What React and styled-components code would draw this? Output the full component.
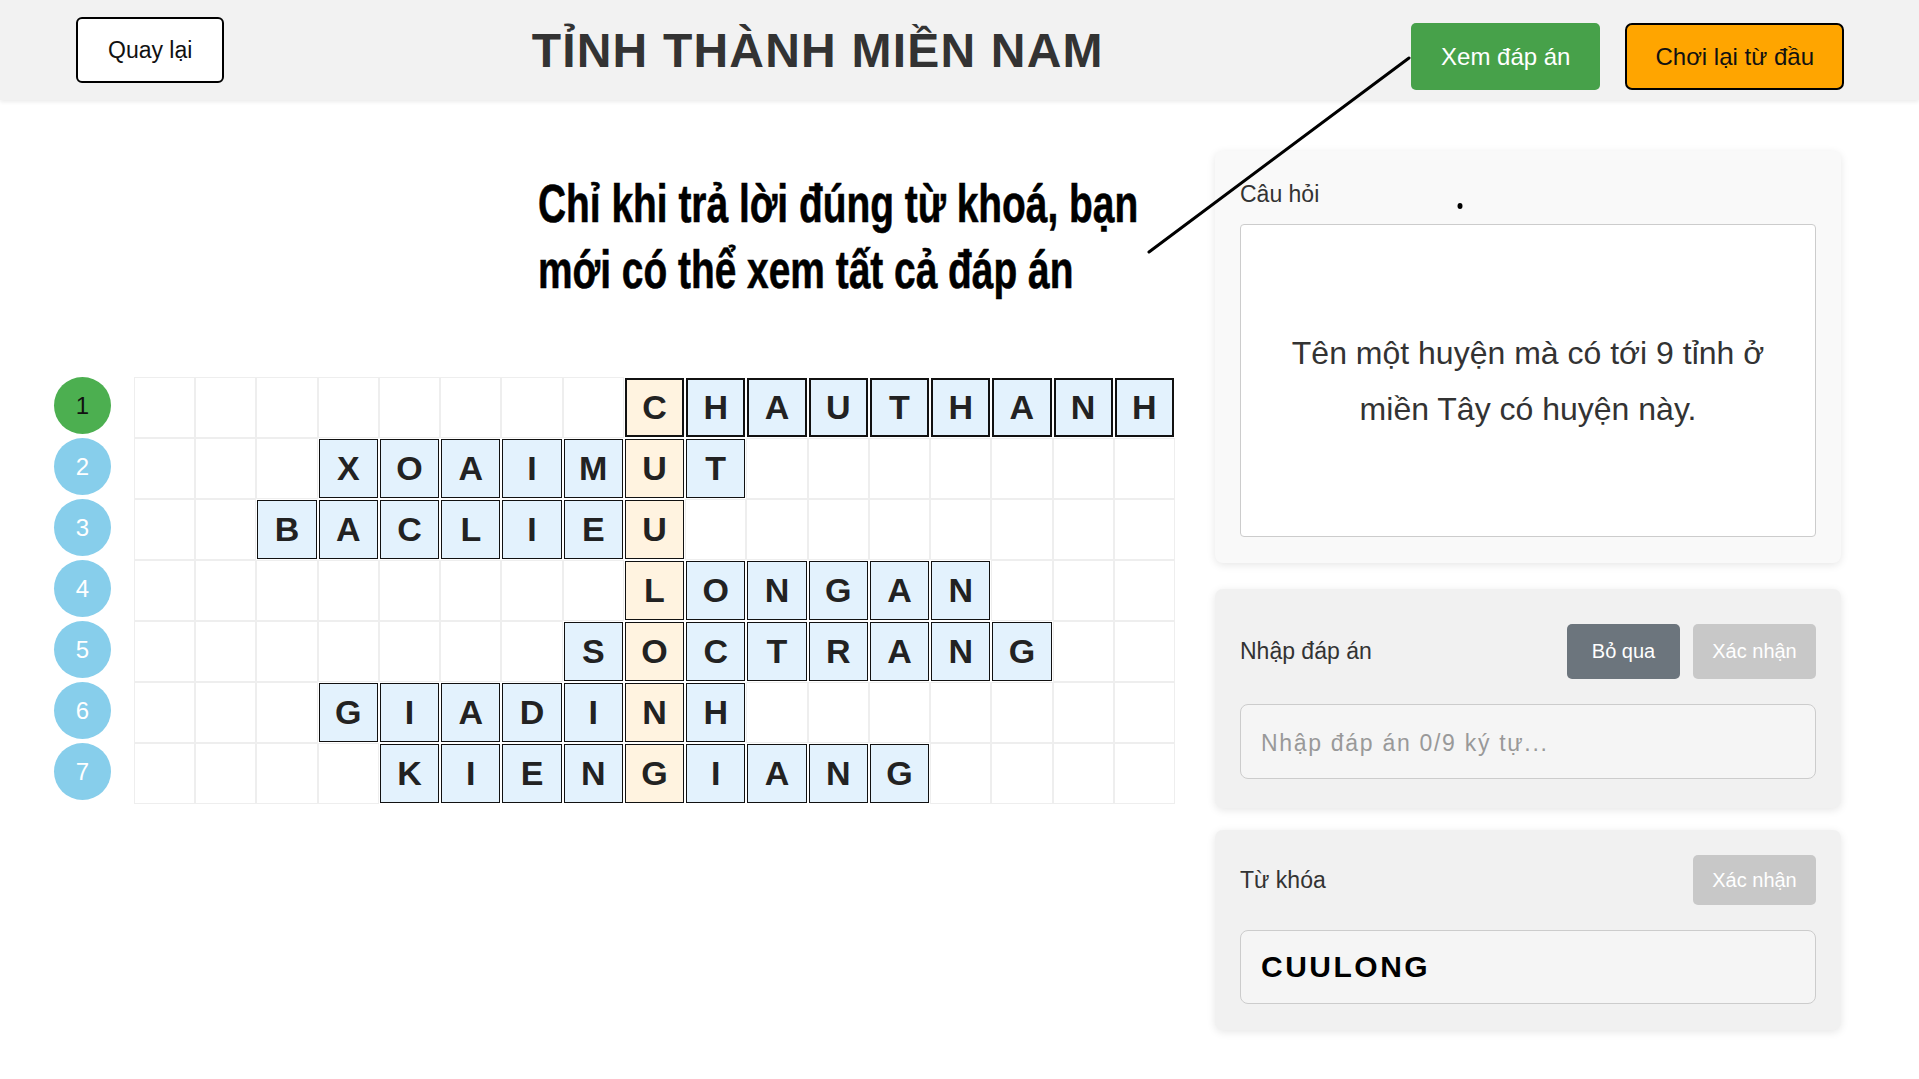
import React from "react";
import styled, { createGlobalStyle, css } from "styled-components";

const rows = [
  { word: "CHAUTHANH", start: 8 },
  { word: "XOAIMUT", start: 3 },
  { word: "BACLIEU", start: 2 },
  { word: "LONGAN", start: 8 },
  { word: "SOCTRANG", start: 7 },
  { word: "GIADINH", start: 3 },
  { word: "KIENGIANG", start: 4 },
];
const COLS = 17;
const KEY_COL = 8;
const ACTIVE_ROW = 0;

const GlobalStyle = createGlobalStyle`
  *, *::before, *::after { box-sizing: border-box; }
  body {
    margin: 0;
    background: #fff;
    font-family: "Liberation Sans", Arial, sans-serif;
    color: #333;
  }
`;

const App = () => {
  return (
    <Page>
      <GlobalStyle />
      <Header>
        <BackButton>Quay lại</BackButton>
        <Title>TỈNH THÀNH MIỀN NAM</Title>
        <Actions>
          <HeaderButton $variant="green">Xem đáp án</HeaderButton>
          <HeaderButton $variant="orange">Chơi lại từ đầu</HeaderButton>
        </Actions>
      </Header>

      <Main>
        <BoardArea>
          <Numbers>
            {rows.map((r, i) => (
              <Number key={i} $active={i === ACTIVE_ROW}>
                {i + 1}
              </Number>
            ))}
          </Numbers>
          <Board>
            {rows.map((r, ri) =>
              Array.from({ length: COLS }).map((_, ci) => {
                const idx = ci - r.start;
                const letter = idx >= 0 && idx < r.word.length ? r.word[idx] : null;
                return (
                  <Cell
                    key={`${ri}-${ci}`}
                    $filled={!!letter}
                    $keyCol={ci === KEY_COL}
                    $active={ri === ACTIVE_ROW}
                  >
                    {letter}
                  </Cell>
                );
              })
            )}
          </Board>
        </BoardArea>

        <Side>
          <Card $bg="#f9f9f9" $pad="25px 25px 26px">
            <QuestionLabel>Câu hỏi</QuestionLabel>
            <QuestionBox>
              Tên một huyện mà có tới 9 tỉnh ở miền Tây có huyện này.
            </QuestionBox>
          </Card>

          <Card $bg="#f1f1f1" $pad="35px 25px 29px" $mt={4}>
            <CardHead>
              <Label>Nhập đáp án</Label>
              <ButtonGroup>
                <ActionButton $variant="gray" $w={113}>Bỏ qua</ActionButton>
                <ActionButton $variant="disabled" $w={123}>Xác nhận</ActionButton>
              </ButtonGroup>
            </CardHead>
            <AnswerInput placeholder="Nhập đáp án 0/9 ký tự..." />
          </Card>

          <Card $bg="#f1f1f1" $pad="25px 25px 26px">
            <CardHead>
              <Label>Từ khóa</Label>
              <ActionButton $variant="disabled" $w={123} $h={50}>Xác nhận</ActionButton>
            </CardHead>
            <KeywordInput readOnly value="CUULONG" />
          </Card>
        </Side>
      </Main>

      <Note>
        Chỉ khi trả lời đúng từ khoá, bạn
        <br />
        mới có thể xem tất cả đáp án
      </Note>
      <Pointer viewBox="0 0 1919 1079">
        <line x1="1409" y1="58" x2="1149" y2="252" stroke="#000" strokeWidth="3" strokeLinecap="round" />
        <ellipse cx="1460" cy="206" rx="2.5" ry="3" fill="#000" />
      </Pointer>
    </Page>
  );
};

const Page = styled.div`
  position: relative;
  min-height: 1079px;
  overflow: hidden;
`;

const Header = styled.header`
  height: 100px;
  padding: 0 75px 0 76px;
  display: flex;
  align-items: center;
  justify-content: space-between;
  background-color: #f2f2f2;
  box-shadow: 0 2px 4px rgba(0, 0, 0, 0.08);
`;

const BackButton = styled.button`
  height: 66px;
  padding: 0 30px;
  border: 2px solid #000;
  border-radius: 6px;
  background: #fff;
  font-family: inherit;
  font-size: 23px;
  color: #111;
`;

const Title = styled.h1`
  margin: 0;
  font-size: 48px;
  font-weight: 700;
  letter-spacing: 1.2px;
  color: #333;
`;

const Actions = styled.div`
  display: flex;
  gap: 25px;
  margin-top: 13px;
`;

const HeaderButton = styled.button`
  height: 67px;
  border-radius: 5px;
  font-family: inherit;
  font-size: 24px;
  ${(p) =>
    p.$variant === "green"
      ? css`
          padding: 0 30px;
          background: #47a14a;
          color: #fff;
          border: none;
        `
      : css`
          padding: 0 28px;
          background: #ffa500;
          color: #111;
          border: 2px solid #000;
          border-radius: 7px;
        `}
`;

const Main = styled.main`
  display: flex;
  align-items: flex-start;
  padding: 51px 78px 0 54px;
`;

const BoardArea = styled.section`
  display: flex;
  gap: 23px;
  padding-top: 226px;
`;

const Numbers = styled.div`
  display: flex;
  flex-direction: column;
  gap: 4px;
`;

const Number = styled.div`
  width: 57px;
  height: 57px;
  border-radius: 50%;
  display: flex;
  align-items: center;
  justify-content: center;
  font-size: 24px;
  background: ${(p) => (p.$active ? "#4caf50" : "#87ceeb")};
  color: ${(p) => (p.$active ? "#111" : "#fff")};
`;

const Board = styled.div`
  width: 1041px;
  display: grid;
  grid-template-columns: repeat(${COLS}, 1fr);
  grid-auto-rows: 61px;
`;

const Cell = styled.div`
  display: flex;
  align-items: center;
  justify-content: center;
  border: 1px solid #eee;
  font-size: 34px;
  font-weight: 700;
  color: #222;
  ${(p) =>
    p.$filled &&
    css`
      margin: 1px;
      border: ${p.$active ? 2 : 1}px solid #111;
      background: ${p.$keyCol ? "#fff3e0" : "#e3f2fd"};
    `}
`;

const Side = styled.aside`
  width: 626px;
  margin-left: auto;
  display: flex;
  flex-direction: column;
  gap: 22px;
`;

const Card = styled.div`
  margin-top: ${(p) => p.$mt || 0}px;
  padding: ${(p) => p.$pad};
  background: ${(p) => p.$bg};
  border-radius: 8px;
  box-shadow: 0 2px 8px rgba(0, 0, 0, 0.1);
`;

const QuestionLabel = styled.div`
  font-size: 23px;
  line-height: 36px;
  margin-bottom: 12px;
  color: #333;
`;

const QuestionBox = styled.div`
  height: 313px;
  padding: 0 20px;
  display: flex;
  align-items: center;
  justify-content: center;
  text-align: center;
  background: #fff;
  border: 1px solid #ccc;
  border-radius: 4px;
  font-size: 32px;
  line-height: 56px;
  color: #333;
`;

const CardHead = styled.div`
  display: flex;
  align-items: center;
  justify-content: space-between;
`;

const Label = styled.span`
  font-size: 23px;
  color: #333;
`;

const ButtonGroup = styled.div`
  display: flex;
  gap: 13px;
`;

const ActionButton = styled.button`
  width: ${(p) => p.$w}px;
  height: ${(p) => p.$h || 55}px;
  border: none;
  border-radius: 5px;
  font-family: inherit;
  font-size: 20px;
  color: #fff;
  background: ${(p) => (p.$variant === "gray" ? "#6c757d" : "#c8c8c8")};
`;

const inputBase = css`
  display: block;
  width: 100%;
  margin-top: 25px;
  padding: 0 20px;
  background: #f5f5f5;
  border: 1px solid #ccc;
  border-radius: 8px;
  font-family: inherit;
  outline: none;
`;

const AnswerInput = styled.input`
  ${inputBase}
  height: 75px;
  padding-top: 4px;
  font-size: 23px;
  letter-spacing: 1.7px;
  color: #333;
  &::placeholder {
    color: #999;
  }
`;

const KeywordInput = styled.input`
  ${inputBase}
  height: 74px;
  font-size: 30px;
  font-weight: 700;
  letter-spacing: 2.5px;
  color: #000;
`;

const Note = styled.div`
  position: absolute;
  left: 538px;
  top: 170px;
  font-size: 54px;
  font-weight: 700;
  line-height: 66px;
  color: #000;
  white-space: nowrap;
  transform: scaleX(0.72);
  transform-origin: left top;
  -webkit-text-stroke: 0.6px #000;
`;

const Pointer = styled.svg`
  position: absolute;
  left: 0;
  top: 0;
  width: 1919px;
  height: 1079px;
  pointer-events: none;
`;

export default App;
